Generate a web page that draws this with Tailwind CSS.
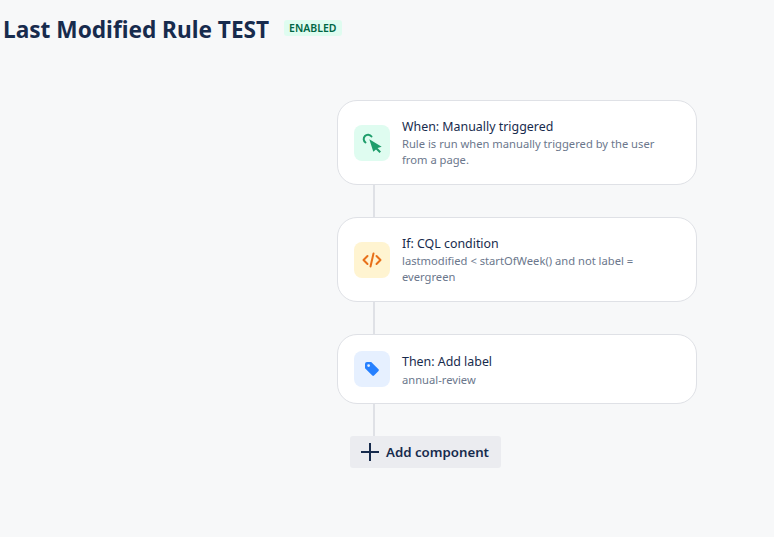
<!DOCTYPE html>
<html lang="en">
<head>
  <meta charset="UTF-8" />
  <title>Last Modified Rule TEST</title>
  <script src="https://cdn.jsdelivr.net/npm/@tailwindcss/browser@4"></script>
</head>
<body class="bg-[#f7f8f9] h-[537px] overflow-hidden font-['Noto_Sans','Open_Sans',sans-serif] text-[#172b4d]">
  <header class="flex items-center h-[59px] pl-[3px] gap-[15px]">
    <h1 class="text-[22.65px] leading-[28px] font-bold">Last Modified Rule TEST</h1>
    <span class="bg-[#dffcf0] text-[#006644] text-[10.5px] leading-[16px] font-semibold px-[5px] rounded-[3px] -mt-[4px]">ENABLED</span>
  </header>

  <main class="ml-[337px] mt-[41px] w-[360px] flex flex-col">
    <!-- trigger -->
    <div class="h-[85px] bg-white border border-[#dfe1e6] rounded-[20px] flex items-center pl-4 pr-6 gap-[12px]">
      <div class="w-9 h-9 rounded-lg bg-[#dffcf0] flex items-center justify-center shrink-0">
        <svg width="22" height="22" viewBox="0 0 22 22" fill="none">
          <path d="M4.5 10.5A4.3 4.3 0 1 1 10.5 4.5" stroke="#1f9d6b" stroke-width="2" stroke-linecap="round"/>
          <path d="M8.3 7.3l12.4 7.4-4.2 1.3 3.5 3.5-1.5 1.5-3.5-3.5-2.7 2.2z" fill="#1f9d6b"/>
        </svg>
      </div>
      <div class="min-w-0">
        <div class="text-[12.4px] leading-[18px]">When: Manually triggered</div>
        <div class="text-[11.2px] leading-[16px] text-[#6b778c]">Rule is run when manually triggered by the user from a page.</div>
      </div>
    </div>
    <div class="ml-[36px] w-[2px] h-[32px] bg-[#dfe1e6]"></div>

    <!-- condition -->
    <div class="h-[85px] bg-white border border-[#dfe1e6] rounded-[20px] flex items-center pl-4 pr-6 gap-[12px]">
      <div class="w-9 h-9 rounded-lg bg-[#fff4d1] flex items-center justify-center shrink-0">
        <svg width="20" height="20" viewBox="0 0 20 20" fill="none" stroke="#e8701a" stroke-width="2" stroke-linecap="round" stroke-linejoin="round">
          <path d="M5.5 6L1.5 10l4 4"/>
          <path d="M14.5 6l4 4-4 4"/>
          <path d="M11.5 3.5L8.5 16.5"/>
        </svg>
      </div>
      <div class="min-w-0">
        <div class="text-[12.4px] leading-[18px]">If: CQL condition</div>
        <div class="text-[11.2px] leading-[16px] text-[#6b778c]">lastmodified &lt; startOfWeek() and not label = evergreen</div>
      </div>
    </div>
    <div class="ml-[36px] w-[2px] h-[32px] bg-[#dfe1e6]"></div>

    <!-- action -->
    <div class="h-[70px] bg-white border border-[#dfe1e6] rounded-[20px] flex items-center pl-4 pr-6 gap-[12px]">
      <div class="w-9 h-9 rounded-lg bg-[#e6f0ff] flex items-center justify-center shrink-0">
        <svg width="16" height="16" viewBox="0 0 16 16">
          <path d="M1 3a2 2 0 0 1 2-2h4.2l7.3 7.3a1.2 1.2 0 0 1 0 1.7l-4.5 4.5a1.2 1.2 0 0 1-1.7 0L1 7.2zM4.6 6a1.4 1.4 0 1 0 0-2.8 1.4 1.4 0 0 0 0 2.8z" fill="#2680ff" fill-rule="evenodd"/>
        </svg>
      </div>
      <div class="min-w-0 pt-[1px]">
        <div class="text-[12.4px] leading-[20px]">Then: Add label</div>
        <div class="text-[11.2px] leading-[16px] text-[#6b778c]">annual-review</div>
      </div>
    </div>
    <div class="ml-[36px] w-[2px] h-[32px] bg-[#dfe1e6]"></div>

    <button class="ml-[13px] w-[151px] h-[32px] bg-[#ebecf0] rounded-[3px] flex items-center pl-[11px] gap-[7px] text-[13.25px] font-semibold">
      <svg width="18" height="18" viewBox="0 0 18 18" stroke="#172b4d" stroke-width="2"><path d="M9 0v18M0 9h18"/></svg>
      <span class="pt-[1px]">Add component</span>
    </button>
  </main>
</body>
</html>
